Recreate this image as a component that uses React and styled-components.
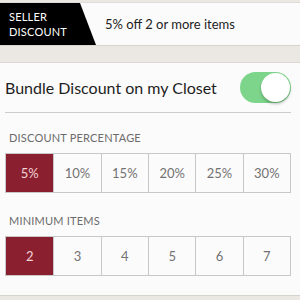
import styled, { createGlobalStyle } from "styled-components";

const Global = createGlobalStyle`
  html, body { margin: 0; padding: 0; background: #ebe8e4; }
  body { font-family: Lato, "Open Sans", sans-serif; width: 300px; height: 300px; overflow: hidden; }
`;

const percents = ["5%", "10%", "15%", "20%", "25%", "30%"];
const items = ["2", "3", "4", "5", "6", "7"];

export default function App() {
  return (
    <Page>
      <Global />
      <TopBar>
        <Badge>
          SELLER
          <br />
          DISCOUNT
        </Badge>
        <Headline>5% off 2 or more items</Headline>
      </TopBar>
      <Card>
        <ToggleRow>
          <ToggleLabel>Bundle Discount on my Closet</ToggleLabel>
          <Switch>
            <Knob />
          </Switch>
        </ToggleRow>
        <SectionTitle>DISCOUNT PERCENTAGE</SectionTitle>
        <Options>
          {percents.map((p, i) => (
            <Option key={p} $active={i === 0}>{p}</Option>
          ))}
        </Options>
        <SectionTitle $gap={21}>MINIMUM ITEMS</SectionTitle>
        <Options>
          {items.map((n, i) => (
            <Option key={n} $active={i === 0}>{n}</Option>
          ))}
        </Options>
      </Card>
    </Page>
  );
}

const Page = styled.div`
  display: flex;
  flex-direction: column;
  padding-top: 2px;
`;

const TopBar = styled.div`
  display: flex;
  align-items: center;
  height: 42px;
  background: #fcfbfb;
  border-top: 1px solid #dedbd8;
  border-bottom: 1px solid #d8d5d1;
`;

const Badge = styled.div`
  align-self: stretch;
  width: 96px;
  box-sizing: border-box;
  padding: 6px 0 0 9px;
  background: #000;
  color: #fff;
  font-size: 11px;
  line-height: 15px;
  letter-spacing: 0.2px;
  clip-path: polygon(0 0, 80px 0, 96px 100%, 0 100%);
`;

const Headline = styled.div`
  margin-left: 9px;
  font-size: 13px;
  color: #222;
`;

const Card = styled.div`
  margin-top: 16px;
  height: 232px;
  background: #fcfbfb;
  border-top: 1px solid #dcd9d6;
  border-bottom: 1px solid #d6d3cf;
  padding: 0 9px 0 5px;
  display: flex;
  flex-direction: column;
`;

const ToggleRow = styled.div`
  display: flex;
  align-items: center;
  justify-content: space-between;
  height: 49px;
  border-bottom: 1px solid #cfcccb;
`;

const ToggleLabel = styled.div`
  font-size: 16px;
  color: #1e1e1e;
`;

const Switch = styled.div`
  width: 51px;
  height: 31px;
  border-radius: 16px;
  background: #7dd58b;
  display: flex;
  align-items: center;
  justify-content: flex-end;
  padding-right: 1px;
  box-sizing: border-box;
`;

const Knob = styled.div`
  width: 29px;
  height: 29px;
  border-radius: 50%;
  background: #fff;
  box-shadow: 0 2px 3px rgba(0, 0, 0, 0.25);
`;

const SectionTitle = styled.div`
  margin: ${(p) => p.$gap || 18}px 0 0 4px;
  font-size: 11px;
  color: #6b6b6b;
  letter-spacing: 0.2px;
`;

const Options = styled.div`
  display: grid;
  grid-template-columns: repeat(6, 1fr);
  margin-top: 9px;
  width: 286px;
  border: 1px solid #c9c7c7;
  box-sizing: border-box;
`;

const Option = styled.div`
  height: 38px;
  display: flex;
  align-items: center;
  justify-content: center;
  font-size: 13px;
  color: ${(p) => (p.$active ? "#f2d3d6" : "#727272")};
  background: ${(p) => (p.$active ? "#8a1f30" : "transparent")};
  & + & {
    border-left: 1px solid #c9c7c7;
  }
`;
